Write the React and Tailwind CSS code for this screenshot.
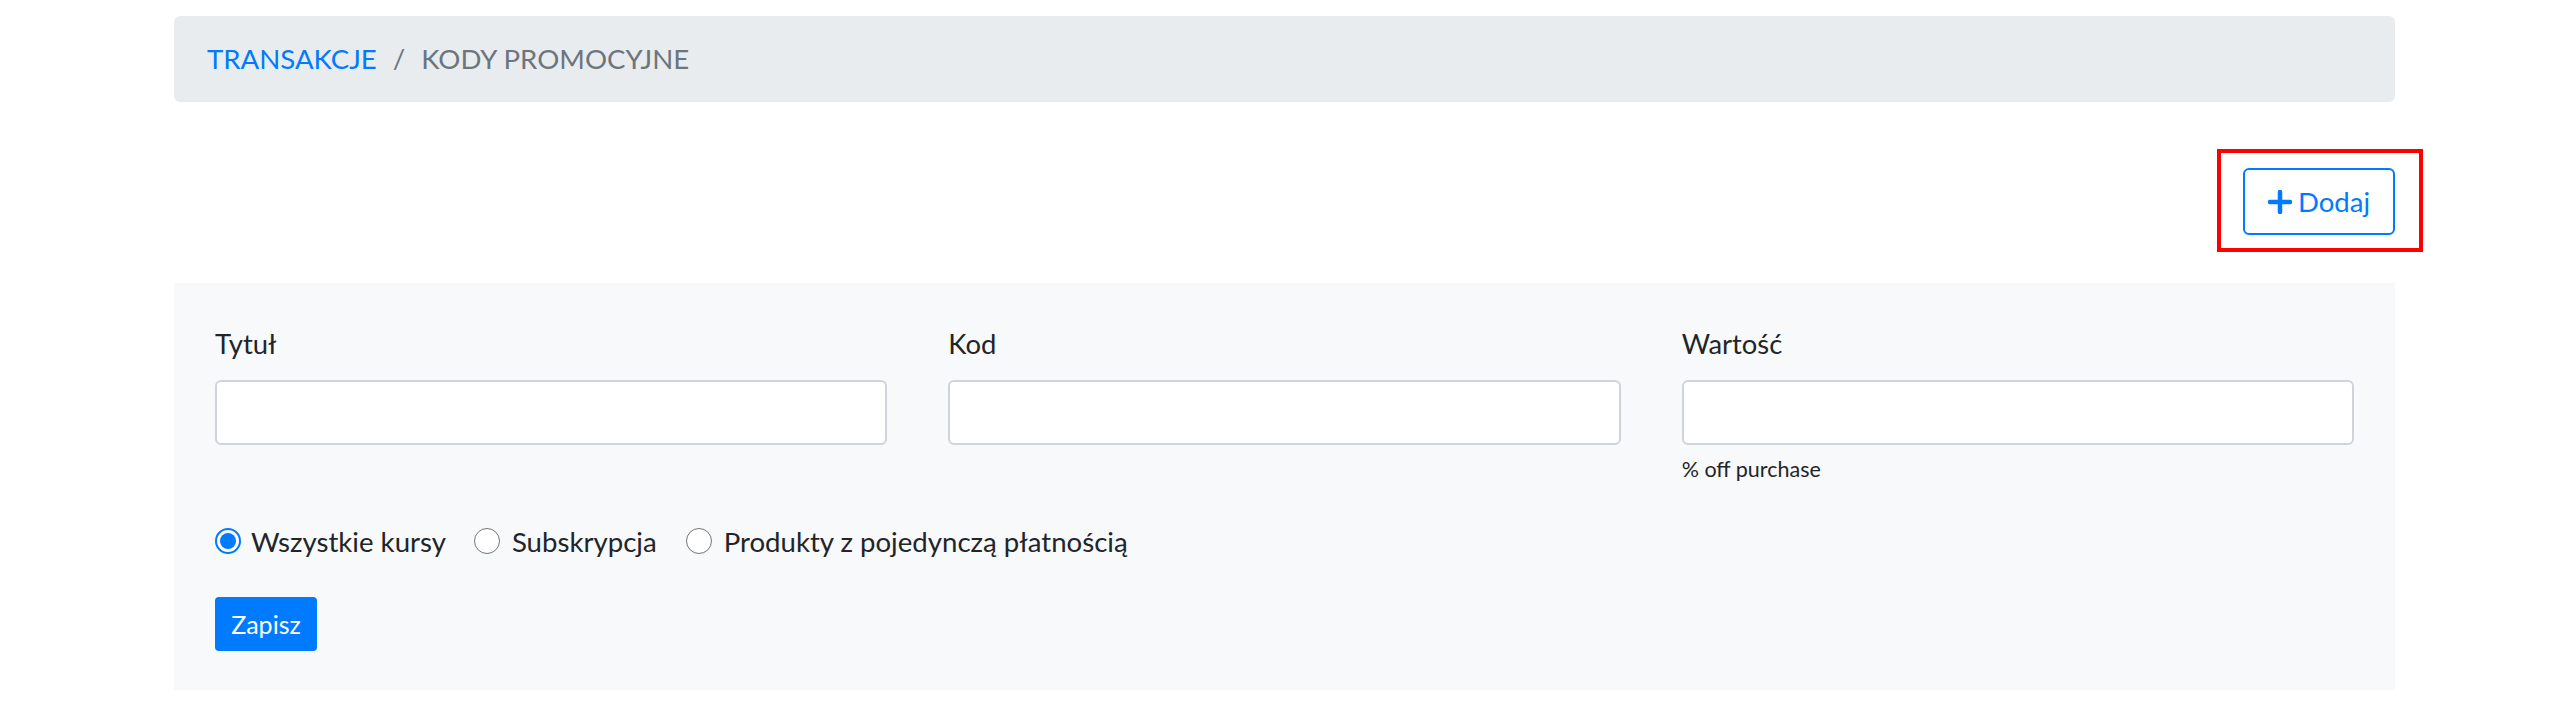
export default function App() {
  return (
    <div className="min-h-screen bg-white pt-[16px]" style={{ fontFamily: "Lato, 'Open Sans', sans-serif" }}>
      <div className="ml-[174px] w-[2221px]">
        {/* breadcrumb */}
        <nav className="flex h-[86px] items-center rounded-[6px] bg-[#e9ecef] px-[33px] text-[27.6px]">
          <a className="text-[#007bff]">TRANSAKCJE</a>
          <span className="px-[16px] text-[#6c757d]">/</span>
          <span className="text-[#6c757d]">KODY PROMOCYJNE</span>
        </nav>

        <div className="mt-[66px] flex justify-end">
          <div className="relative">
            <button className="flex h-[67px] w-[152px] items-center justify-center gap-[6px] rounded-[6px] border-2 border-[#007bff] text-[27.5px] text-[#007bff]">
              <svg width="24" height="24" viewBox="0 0 24 24" fill="none" stroke="#007bff" strokeWidth="4.5" strokeLinecap="round">
                <path d="M12 2v20M2 12h20" />
              </svg>
              Dodaj
            </button>
            <span className="pointer-events-none absolute -bottom-[17px] -left-[26px] -right-[28px] -top-[19px] border-4 border-[#ff0000]" />
          </div>
        </div>

        {/* form */}
        <div className="mt-[48px] h-[407px] bg-[#f8f9fa] px-[41px] pt-[42px]">
          <div className="grid grid-cols-3 gap-x-[61px]">
            {[
              ["Tytuł", null],
              ["Kod", null],
              ["Wartość", "% off purchase"],
            ].map(([label, hint]) => (
              <div key={label}>
                <div className="h-[37px] text-[27.4px] leading-[37px] text-[#212529]">{label}</div>
                <input className="mt-[18px] block h-[65px] w-full rounded-[6px] border-2 border-[#ced4da] bg-white" />
                {hint && <div className="mt-[8px] text-[21.5px] text-[#212529]">{hint}</div>}
              </div>
            ))}
          </div>

          <div className="mt-[36px] flex h-[40px] items-center text-[27.6px] text-[#212529]">
            <label className="flex items-center">
              <span className="flex h-[26px] w-[26px] items-center justify-center rounded-full border-2 border-[#007bff] bg-white">
                <span className="h-[16px] w-[16px] rounded-full bg-[#007bff]" />
              </span>
              <span className="ml-[10px]">Wszystkie kursy</span>
            </label>
            <label className="ml-[28px] flex items-center">
              <span className="h-[26px] w-[26px] rounded-full border border-[#767676] bg-white" />
              <span className="ml-[12px]">Subskrypcja</span>
            </label>
            <label className="ml-[29px] flex items-center">
              <span className="h-[26px] w-[26px] rounded-full border border-[#767676] bg-white" />
              <span className="ml-[12px]">Produkty z pojedynczą płatnością</span>
            </label>
          </div>

          <button className="mt-[36px] flex h-[54px] w-[102px] items-center justify-center rounded-[4px] bg-[#007bff] text-[25px] text-white">
            Zapisz
          </button>
        </div>
      </div>
    </div>
  );
}
